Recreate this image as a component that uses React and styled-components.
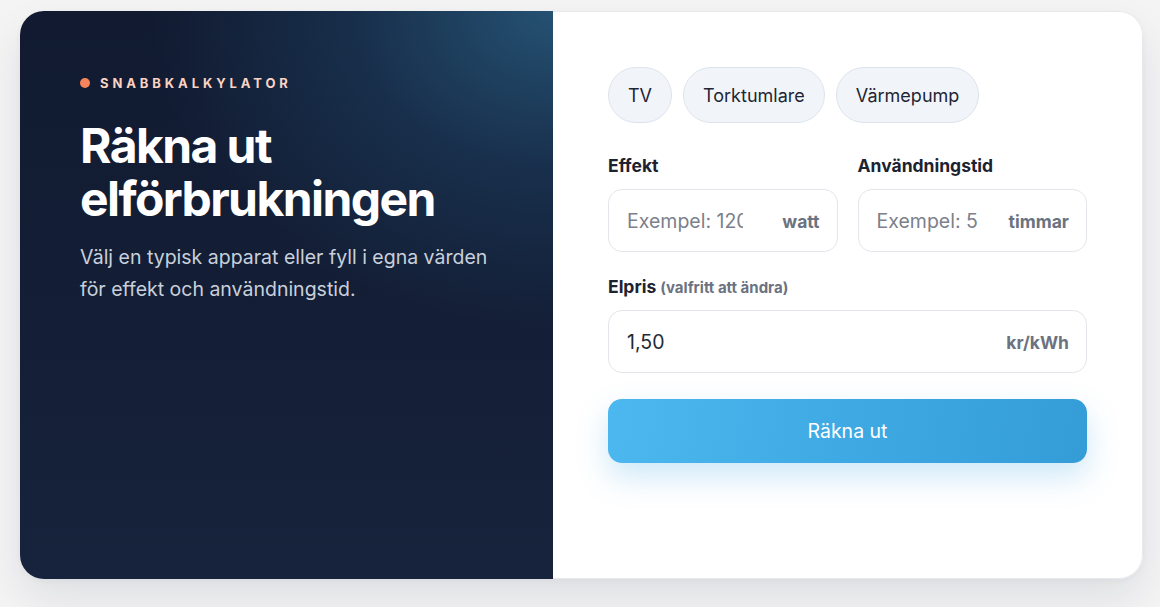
import React from "react";
import styled, { createGlobalStyle } from "styled-components";

const GlobalStyle = createGlobalStyle`
  * { box-sizing: border-box; }
  html, body {
    margin: 0;
    padding: 0;
    background: #f4f4f5;
    font-family: Inter, "Noto Sans", sans-serif;
    -webkit-font-smoothing: antialiased;
  }
`;

const Page = styled.div`
  padding: 11px 0 0 20px;
  height: 607px;
`;

const Card = styled.div`
  width: 1123px;
  height: 568px;
  display: grid;
  grid-template-columns: 533px 1fr;
  border-radius: 24px;
  overflow: hidden;
  box-shadow: 0 20px 44px rgba(15, 23, 42, 0.09), 0 2px 6px rgba(15, 23, 42, 0.04);
`;

const Intro = styled.section`
  padding: 62px 60px;
  color: #fff;
  background:
    radial-gradient(ellipse 95% 70% at 100% 0%, rgba(38, 84, 118, 0.95) 0%, rgba(30, 66, 100, 0.5) 40%, rgba(20, 34, 58, 0) 80%),
    linear-gradient(180deg, #111a30 0%, #141f37 60%, #17233c 100%);
`;

const Eyebrow = styled.div`
  display: flex;
  align-items: center;
  gap: 10px;
  font-size: 13px;
  line-height: 20px;
  font-weight: 700;
  letter-spacing: 0.3em;
  color: #f9d3c4;
`;

const Dot = styled.span`
  width: 10px;
  height: 10px;
  border-radius: 50%;
  background: #f5845a;
`;

const Title = styled.h1`
  margin: 26px 0 0;
  font-size: 48px;
  line-height: 53px;
  font-weight: 700;
  letter-spacing: -0.033em;
  color: #ffffff;
`;

const Lead = styled.p`
  margin: 16px 0 0;
  max-width: 420px;
  font-size: 19.5px;
  line-height: 32px;
  color: #c9d0db;
`;

const Form = styled.section`
  background: #fff;
  padding: 55px;
  border: 1px solid #e7e9ed;
  border-left: none;
  border-radius: 0 24px 24px 0;
`;

const Presets = styled.div`
  display: flex;
  gap: 11px;
`;

const Chip = styled.button`
  height: 56px;
  padding: 0 19px;
  border-radius: 999px;
  border: 1px solid #dde3ec;
  background: #f1f5fa;
  color: #1f2533;
  font-family: inherit;
  font-size: 18px;
  cursor: pointer;
`;

const Row = styled.div`
  display: grid;
  grid-template-columns: 1fr 1fr;
  gap: 20px;
  margin-top: ${(p) => p.$top || 0}px;
`;

const Field = styled.div`
  margin-top: ${(p) => p.$top || 0}px;
`;

const Label = styled.label`
  display: block;
  font-size: 17.5px;
  line-height: 20px;
  font-weight: 700;
  color: #1d2230;
  margin-bottom: 13px;
`;

const Hint = styled.span`
  font-size: 15px;
  line-height: 1;
  font-weight: 700;
  color: #6b7280;
`;

const InputWrap = styled.div`
  position: relative;
`;

const Input = styled.input`
  width: 100%;
  height: 63px;
  padding: 0 94px 0 18px;
  border: 1px solid #e2e5ea;
  border-radius: 14px;
  background: #fff;
  font-family: inherit;
  font-size: 19.5px;
  color: #1f2937;
  outline: none;
  &::placeholder { color: #7b808b; }
`;

const Unit = styled.span`
  position: absolute;
  right: 18px;
  top: 50%;
  transform: translateY(-50%);
  font-size: 17.5px;
  font-weight: 700;
  color: #6b7280;
  pointer-events: none;
`;

const Submit = styled.button`
  display: block;
  width: 100%;
  height: 64px;
  margin-top: 26px;
  border: none;
  border-radius: 14px;
  background: linear-gradient(100deg, #4db7ef 0%, #3fa9e3 50%, #349dd8 100%);
  color: #fff;
  font-family: inherit;
  font-size: 19.5px;
  box-shadow: 0 14px 30px rgba(59, 165, 226, 0.25);
  cursor: pointer;
`;

const presets = ["TV", "Torktumlare", "Värmepump"];

export default function App() {
  return (
    <>
      <GlobalStyle />
      <Page>
        <Card>
          <Intro>
            <Eyebrow>
              <Dot />
              SNABBKALKYLATOR
            </Eyebrow>
            <Title>
              Räkna ut
              <br />
              elförbrukningen
            </Title>
            <Lead>
              Välj en typisk apparat eller fyll i egna värden för effekt och användningstid.
            </Lead>
          </Intro>
          <Form>
            <Presets>
              {presets.map((p) => (
                <Chip key={p}>{p}</Chip>
              ))}
            </Presets>
            <Row $top={33}>
              <div>
                <Label>Effekt</Label>
                <InputWrap>
                  <Input placeholder="Exempel: 1200" />
                  <Unit>watt</Unit>
                </InputWrap>
              </div>
              <div>
                <Label>Användningstid</Label>
                <InputWrap>
                  <Input placeholder="Exempel: 5" />
                  <Unit>timmar</Unit>
                </InputWrap>
              </div>
            </Row>
            <Field $top={25}>
              <Label>
                Elpris <Hint>(valfritt att ändra)</Hint>
              </Label>
              <InputWrap>
                <Input defaultValue="1,50" />
                <Unit>kr/kWh</Unit>
              </InputWrap>
            </Field>
            <Submit>Räkna ut</Submit>
          </Form>
        </Card>
      </Page>
    </>
  );
}
